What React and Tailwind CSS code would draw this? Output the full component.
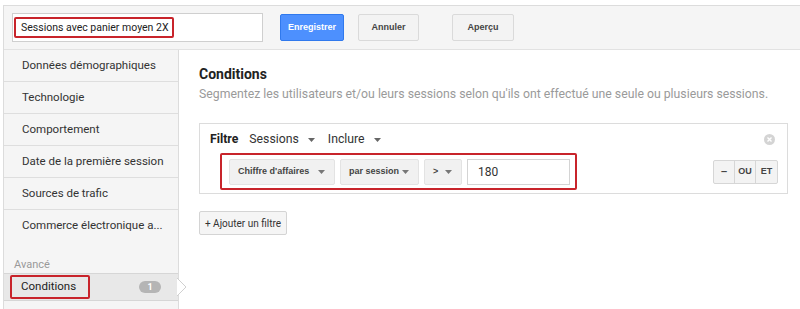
import React from "react";

const Caret = ({ className = "" }) => (
  <svg width="7" height="4" viewBox="0 0 7 4" className={className}>
    <path d="M0 0 L7 0 L3.5 4 Z" fill="currentColor" />
  </svg>
);

const sideItems = [
  "Données démographiques",
  "Technologie",
  "Comportement",
  "Date de la première session",
  "Sources de trafic",
];

const Dropdown = ({ label, width }) => (
  <div
    className={`${width} h-[26px] flex items-center justify-between pl-[8px] pr-[9px] bg-[#f1f1f1] border border-[#e3e3e3] rounded-[2px] text-[9px] font-bold text-[#444] whitespace-nowrap font-['Liberation_Sans',sans-serif]`}
  >
    <span>{label}</span>
    <Caret className="text-[#777] shrink-0" />
  </div>
);

export default function App() {
  return (
    <div className="w-[800px] h-[309px] overflow-hidden bg-white pl-[3px] pt-[5px] whitespace-nowrap font-['Roboto',sans-serif]">
      <div className="h-full border-l border-t border-[#dcdcdc] flex flex-col">
        {/* Top bar */}
        <div className="h-[44px] shrink-0 bg-[#f5f5f5] border-b border-[#e2e2e2] flex items-center pl-[8px]">
          <div className="w-[251px] h-[29px] bg-white border border-[#cfcfcf] flex items-center pl-[1px]">
            <span className="h-[21px] w-[160px] border-2 border-[#c8242b] rounded-[2px] flex items-center pl-[5px] text-[10.5px] text-[#222]">
              Sessions avec panier moyen 2X
            </span>
          </div>
          <button className="ml-[17px] w-[64px] h-[27px] bg-[#4d90fe] border border-[#3079ed] rounded-[2px] text-white text-[9px] font-bold font-['Liberation_Sans',sans-serif]">
            Enregistrer
          </button>
          <button className="ml-[14px] w-[61px] h-[27px] bg-[#f3f3f3] border border-[#dadada] rounded-[2px] text-[#444] text-[9px] font-bold font-['Liberation_Sans',sans-serif]">
            Annuler
          </button>
          <button className="ml-[33px] w-[62px] h-[27px] bg-[#f3f3f3] border border-[#dadada] rounded-[2px] text-[#444] text-[9px] font-bold font-['Liberation_Sans',sans-serif]">
            Aperçu
          </button>
        </div>

        <div className="flex flex-1 min-h-0">
          {/* Sidebar */}
          <div className="w-[175px] shrink-0 bg-[#f5f5f5] border-r border-[#dcdcdc] flex flex-col">
            {sideItems.map((item) => (
              <div
                key={item}
                className="h-[32px] shrink-0 border-b border-[#dedede] flex items-center pl-[18px] text-[11.5px] text-[#333]"
              >
                {item}
              </div>
            ))}
            <div className="h-[32px] shrink-0 flex items-center pl-[18px] text-[11.5px] text-[#333]">
              Commerce électronique a...
            </div>
            <div className="h-[31px] shrink-0 flex items-end pb-[0px] pl-[10px] text-[11px] text-[#999]">
              Avancé
            </div>
            <div className="relative h-[28px] shrink-0 bg-[#e8e8e8] border-t border-b border-[#d6d6d6] flex items-center pl-[6px] pr-[17px]">
              <span className="h-[24px] w-[80px] border-2 border-[#c8242b] rounded-[2px] flex items-center pl-[9px] text-[11.5px] text-[#222]">
                Conditions
              </span>
              <span className="ml-auto w-[22px] h-[12px] rounded-full bg-[#b5b5b5] text-white text-[9px] font-bold leading-[12px] text-center">
                1
              </span>
              <svg
                width="10"
                height="18"
                viewBox="0 0 10 18"
                className="absolute right-[-9px] top-[4px]"
              >
                <path d="M0 0 L9 9 L0 18 Z" fill="#ffffff" />
                <path d="M0 0 L9 9 L0 18" fill="none" stroke="#d0d0d0" strokeWidth="1" />
              </svg>
            </div>
            <div className="flex-1" />
          </div>

          {/* Main */}
          <div className="flex-1 pl-[20px] pr-[12px] pt-[14px]">
            <div className="text-[14px] font-bold text-[#222] leading-[20px]">Conditions</div>
            <div className="text-[12.25px] text-[#9a9a9a] leading-[18px] mt-[1px]">
              Segmentez les utilisateurs et/ou leurs sessions selon qu'ils ont effectué une seule ou plusieurs sessions.
            </div>

            <div className="mt-[20px] w-[589px] border border-[#dcdcdc] flex flex-col pt-[2px] pb-[3px] pl-[10px] pr-[9px]">
              <div className="h-[27px] flex items-center text-[12.25px] text-[#333]">
                <span className="font-bold text-[#222]">Filtre</span>
                <span className="ml-[11px]">Sessions</span>
                <Caret className="ml-[9px] text-[#666]" />
                <span className="ml-[13px]">Inclure</span>
                <Caret className="ml-[9px] text-[#666]" />
                <svg width="11" height="11" viewBox="0 0 11 11" className="ml-auto mr-[3px]">
                  <circle cx="5.5" cy="5.5" r="5.5" fill="#d4d4d4" />
                  <path d="M3.5 3.5 L7.5 7.5 M7.5 3.5 L3.5 7.5" stroke="#fff" strokeWidth="1.4" />
                </svg>
              </div>
              <div className="flex items-center">
                <div className="ml-[10px] w-[357px] h-[37px] border-2 border-[#c8242b] rounded-[2px] flex items-center gap-[5px] pl-[7px]">
                  <Dropdown label="Chiffre d'affaires" width="w-[106px]" />
                  <Dropdown label="par session" width="w-[79px]" />
                  <Dropdown label=">" width="w-[38px]" />
                  <div className="w-[103px] h-[26px] bg-white border border-[#d4d4d4] flex items-center pl-[10px] text-[12px] text-[#333]">
                    180
                  </div>
                </div>
                <div className="ml-auto flex h-[24px] border border-[#d6d6d6] rounded-[2px] bg-[#f3f3f3] text-[9px] font-bold text-[#444] font-['Liberation_Sans',sans-serif]">
                  <div className="w-[21px] flex items-center justify-center border-r border-[#d6d6d6] text-[11px]">–</div>
                  <div className="w-[21px] flex items-center justify-center border-r border-[#d6d6d6]">OU</div>
                  <div className="w-[21px] flex items-center justify-center">ET</div>
                </div>
              </div>
            </div>

            <button className="mt-[17px] h-[24px] w-[88px] bg-[#f5f5f5] border border-[#d4d4d4] rounded-[2px] text-[10px] text-[#333] font-['Roboto',sans-serif]">
              + Ajouter un filtre
            </button>
          </div>
        </div>
      </div>
    </div>
  );
}
